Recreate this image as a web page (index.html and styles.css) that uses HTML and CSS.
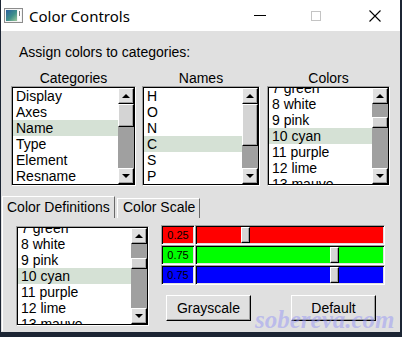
FILE: index.html
```html
<!DOCTYPE html>
<html>
<head>
  <meta charset="utf-8">
  <link rel="stylesheet" href="styles.css">
</head>
<body>
  <div class="window">
    <div class="titlebar">
      <svg class="app-icon" width="19" height="15" viewBox="0 0 19 15">
        <defs>
          <linearGradient id="ig" x1="0" y1="0" x2="1" y2="1">
            <stop offset="0" stop-color="#2a5f9e"/>
            <stop offset="0.55" stop-color="#3f8f8a"/>
            <stop offset="1" stop-color="#9cc89a"/>
          </linearGradient>
        </defs>
        <rect x="0.5" y="0.5" width="18" height="14" fill="#f4f4f4" stroke="#8c8c8c"/>
        <rect x="2" y="2" width="11" height="11" fill="url(#ig)"/>
        <rect x="14" y="2" width="3" height="11" fill="#fff"/>
        <rect x="15" y="3" width="1" height="5" fill="#7a7a7a"/>
      </svg>
      <span class="title">Color Controls</span>
      <span class="cap-min"></span>
      <span class="cap-max"></span>
      <svg class="cap-close" width="12" height="12" viewBox="0 0 12 12">
        <path d="M0.5 0.5L11.5 11.5M11.5 0.5L0.5 11.5" stroke="#000" stroke-width="1.1" fill="none"/>
      </svg>
    </div>

    <div class="prompt">Assign colors to categories:</div>

    <div class="pickers">
      <div class="picker cat">
        <div class="picker-label">Categories</div>
        <div class="listbox">
          <div class="listbox-in">
            <div class="items">
              <ul>
                <li>Display</li>
                <li>Axes</li>
                <li class="sel">Name</li>
                <li>Type</li>
                <li>Element</li>
                <li>Resname</li>
              </ul>
            </div>
            <div class="scrollbar">
              <div class="sb-btn up"></div>
              <div class="sb-track"><div class="sb-thumb" style="margin-top:0;height:23px"></div></div>
              <div class="sb-btn down"></div>
            </div>
          </div>
        </div>
      </div>

      <div class="picker names">
        <div class="picker-label">Names</div>
        <div class="listbox">
          <div class="listbox-in">
            <div class="items">
              <ul>
                <li>H</li>
                <li>O</li>
                <li>N</li>
                <li class="sel">C</li>
                <li>S</li>
                <li>P</li>
              </ul>
            </div>
            <div class="scrollbar">
              <div class="sb-btn up"></div>
              <div class="sb-track"><div class="sb-thumb" style="margin-top:0;height:42px"></div></div>
              <div class="sb-btn down"></div>
            </div>
          </div>
        </div>
      </div>

      <div class="picker colors">
        <div class="picker-label">Colors</div>
        <div class="listbox">
          <div class="listbox-in">
            <div class="items">
              <ul class="scrolled">
                <li>7 green</li>
                <li>8 white</li>
                <li>9 pink</li>
                <li class="sel">10 cyan</li>
                <li>11 purple</li>
                <li>12 lime</li>
                <li>13 mauve</li>
              </ul>
            </div>
            <div class="scrollbar">
              <div class="sb-btn up"></div>
              <div class="sb-track"><div class="sb-thumb" style="margin-top:13px;height:11px"></div></div>
              <div class="sb-btn down"></div>
            </div>
          </div>
        </div>
      </div>
    </div>

    <div class="notebook">
      <div class="tabs">
        <div class="tab active">Color Definitions</div>
        <div class="tab">Color Scale</div>
      </div>
      <div class="panel">
        <div class="listbox defs">
          <div class="listbox-in">
            <div class="items">
              <ul class="scrolled">
                <li>7 green</li>
                <li>8 white</li>
                <li>9 pink</li>
                <li class="sel">10 cyan</li>
                <li>11 purple</li>
                <li>12 lime</li>
                <li>13 mauve</li>
              </ul>
            </div>
            <div class="scrollbar">
              <div class="sb-btn up"></div>
              <div class="sb-track"><div class="sb-thumb" style="margin-top:14px;height:11px"></div></div>
              <div class="sb-btn down"></div>
            </div>
          </div>
        </div>

        <div class="controls">
          <div class="channel red">
            <div class="value">0.25</div>
            <div class="trough"><div class="thumb" style="margin-left:44px"></div></div>
          </div>
          <div class="channel green">
            <div class="value">0.75</div>
            <div class="trough"><div class="thumb" style="margin-left:133px"></div></div>
          </div>
          <div class="channel blue">
            <div class="value">0.75</div>
            <div class="trough"><div class="thumb" style="margin-left:133px"></div></div>
          </div>
          <div class="buttons">
            <div class="btn">Grayscale</div>
            <div class="btn">Default</div>
          </div>
        </div>
      </div>
    </div>

    <div class="watermark">sobereva.com</div>
  </div>
</body>
</html>
```

FILE: styles.css
```css
* { box-sizing: border-box; }
body { margin: 0; padding-left: 1px; width: 402px; height: 337px; overflow: hidden; background: #1c2534; font-family: "Liberation Sans", Arial, sans-serif; font-size: 14px; color: #000; }
.window { position: relative; width: 399px; height: 332px; background: #e0e0e0; }

/* title bar */
.titlebar { display: flex; align-items: center; height: 31px; background: #fff; }
.app-icon { margin-left: 3px; }
.title { margin-left: 6px; font-family: "Noto Sans", sans-serif; font-size: 15px; }
.cap-min { margin-left: auto; width: 12px; height: 1px; background: #000; }
.cap-max { margin-left: 45px; width: 10px; height: 10px; border: 1px solid #c4c4c4; }
.cap-close { margin-left: 48px; margin-right: 19px; }

.prompt { margin: 13px 0 0 18px; line-height: 16px; }

/* the three pickers */
.pickers { display: flex; margin: 10px 0 0 10px; }
.picker-label { text-align: center; line-height: 16px; }
.picker.cat { width: 125px; }
.picker.names { width: 118px; margin-left: 6px; }
.picker.colors { width: 123px; margin-left: 7px; }

.listbox { height: 100px; border: 1px solid; border-color: #a0a0a0 #fff #fff #a0a0a0; }
.listbox-in { display: flex; height: 100%; border: 1px solid #000; }
.items { flex: 1; overflow: hidden; background: #fff; }
.items ul { margin: 0; padding: 0; list-style: none; }
.items ul.scrolled { margin-top: -8px; }
.items li { height: 16px; line-height: 16px; padding-left: 3px; white-space: nowrap; }
.items li.sel { background: #d5e1d5; }

.scrollbar { display: flex; flex-direction: column; width: 16px; }
.sb-btn { display: flex; align-items: center; justify-content: center; height: 16px; background: #e0e0e0; border: 1px solid; border-color: #fff #000 #000 #fff; box-shadow: inset -1px -1px #a0a0a0; }
.sb-btn::after { content: ""; border-left: 4px solid transparent; border-right: 4px solid transparent; }
.sb-btn.up::after { border-bottom: 4px solid #000; margin-top: -1px; }
.sb-btn.down::after { border-top: 4px solid #000; }
.sb-track { flex: 1; background: #a0a0a0; }
.sb-thumb { background: #d4d4d4; border: 1px solid; border-color: #fff #000 #000 #fff; box-shadow: inset -1px -1px #a0a0a0; }

/* notebook */
.notebook { margin-top: 10px; }
.tabs { display: flex; align-items: flex-end; height: 22px; margin-left: 1px; }
.tab { height: 20px; width: 83px; margin-left: 2px; padding-left: 5px; line-height: 16px; border: 1px solid; border-bottom: none; border-color: #fff #696969 transparent #fff; }
.tab.active { height: 22px; width: 113px; margin-left: 0; padding: 2px 0 0 4px; }
.panel { display: flex; height: 113px; margin-left: 1px; padding: 8px 0 0 13px; border-left: 1px solid #fff; }
.listbox.defs { width: 133px; }

/* color sliders */
.controls { width: 224px; margin: -1px 0 0 12px; }
.channel { display: flex; height: 20px; }
.value, .trough { height: 20px; border: 1px solid; border-color: #a0a0a0 #fff #fff #a0a0a0; box-shadow: inset 1px 1px #000, inset -1px -1px #e0e0e0; }
.value { width: 34px; font-size: 11px; line-height: 18px; text-align: center; }
.trough { width: 190px; padding: 1px; }
.red .value, .red .trough { background: #f00; }
.green .value, .green .trough { background: #0f0; }
.blue .value, .blue .trough { background: #00f; }
.thumb { width: 9px; height: 16px; background: #d4d4d4; border: 1px solid; border-color: #fff #000 #000 #fff; box-shadow: inset -1px -1px #a0a0a0; }

.buttons { display: flex; justify-content: space-between; margin-top: 10px; padding: 0 9px 0 5px; }
.btn { width: 85px; height: 26px; line-height: 24px; text-align: center; background: #e0e0e0; border: 1px solid; border-color: #fff #000 #000 #fff; box-shadow: inset -1px -1px #a0a0a0; }

.watermark { position: absolute; left: 254px; top: 307px; font: italic bold 25px/25px "Liberation Serif", serif; color: rgba(150, 150, 245, 0.5); }
```
